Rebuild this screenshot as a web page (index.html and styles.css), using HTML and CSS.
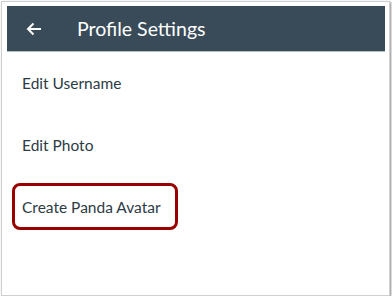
FILE: index.html
```html
<!DOCTYPE html>
<html lang="en">
<head>
  <meta charset="UTF-8">
  <title>Profile Settings</title>
  <link rel="stylesheet" href="styles.css">
</head>
<body>

  <div class="screen">
    <!-- Top bar -->
    <div class="top-bar">
      <svg class="back-icon" width="16" height="14" viewBox="0 0 16 14">
        <path d="M15 7H2M7.5 1.5L2 7l5.5 5.5" fill="none" stroke="#fff" stroke-width="2"/>
      </svg>
      <div class="title">Profile Settings</div>
    </div>

    <!-- Settings list -->
    <div class="settings-list">
      <div class="settings-item">Edit Username</div>
      <div class="settings-item">Edit Photo</div>
      <div class="settings-item"><span class="highlight">Create Panda Avatar</span></div>
    </div>
  </div>

</body>
</html>
```

FILE: styles.css
```css
/* Page */
body {
  margin: 0;
  padding: 1px 0 0 1px;
  background: #fff;
  font-family: 'Lato', 'Liberation Sans', sans-serif;
}

/* Screenshot frame */
.screen {
  box-sizing: border-box;
  width: 389px;
  height: 295px;
  border: 1px solid #cfcfcf;
  box-shadow: 1px 1px 2px rgba(0, 0, 0, 0.45);
  padding: 4px 4px 0 5px;
  background: #fff;
}

/* Header bar */
.top-bar {
  height: 45px;
  background: #394b58;
  border-bottom: 1px solid #b5bfc6;
  display: flex;
  align-items: center;
}

.back-icon {
  margin-left: 19px;
}

.title {
  margin-left: 35px;
  color: #fff;
  font-size: 19.5px;
}

/* List of settings */
.settings-item {
  height: 62px;
  display: flex;
  align-items: center;
  padding-left: 15px;
  color: #2d3b45;
  font-size: 15.5px;
}

/* Red callout around an item */
.highlight {
  position: relative;
  line-height: 20px;
}

.highlight::after {
  content: '';
  position: absolute;
  left: -10px;
  right: -17px;
  top: -14px;
  bottom: -13px;
  border: 3px solid #990000;
  border-radius: 8px;
}
```
